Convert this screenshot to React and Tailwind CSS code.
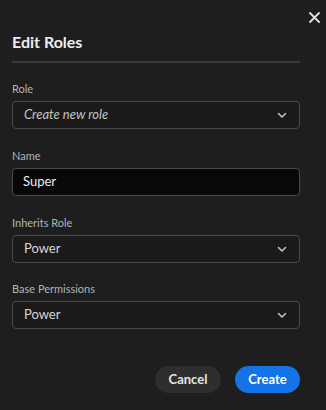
import React from "react";

const font = { fontFamily: "Lato, 'Open Sans', 'Noto Sans', sans-serif" };

function Chevron() {
  return (
    <svg width="10" height="10" viewBox="0 0 10 10" className="text-[#c8c8c8]">
      <path d="M1.5 3.5 L5 7 L8.5 3.5" fill="none" stroke="currentColor" strokeWidth="1.5" strokeLinecap="round" strokeLinejoin="round" />
    </svg>
  );
}

function Select({ value, italic }) {
  return (
    <div className="flex h-[28px] items-center justify-between rounded-[4px] border border-[#4a4a4a] bg-[#1a1a1a] pl-[11px] pr-[12px]">
      <span className={`text-[13px] ${italic ? "italic text-[#c4c4c4]" : "text-[#d6d6d6]"}`}>{value}</span>
      <Chevron />
    </div>
  );
}

function Label({ children }) {
  return <div className="mb-[5px] text-[11px] leading-[15px] text-[#b4b4b4]">{children}</div>;
}

export default function App() {
  return (
    <div className="relative h-[410px] w-[326px] bg-[#1e1e1e]" style={font}>
      <button className="absolute right-[6px] top-[11px] flex h-[12px] w-[12px] items-center justify-center text-[#e0e0e0]">
        <svg width="11" height="11" viewBox="0 0 11 11">
          <path d="M1 1 L10 10 M10 1 L1 10" stroke="currentColor" strokeWidth="1.8" strokeLinecap="round" />
        </svg>
      </button>
      <div className="px-[12px] pt-[32px]">
        <h1 className="text-[16px] font-bold leading-[20px] text-[#eeeeee]">Edit Roles</h1>
        <div className="mt-[9px] h-[2px] w-[288px] bg-[#3a3a3a]" />
        <div className="w-[288px] pt-[18px]">
          <Label>Role</Label>
          <Select value="Create new role" italic />
          <div className="mt-[19px]">
            <Label>Name</Label>
            <div className="flex h-[28px] items-center rounded-[4px] border border-[#4a4a4a] bg-[#080808] pl-[10px]">
              <span className="text-[13px] text-[#ececec]">Super</span>
            </div>
          </div>
          <div className="mt-[19px]">
            <Label>Inherits Role</Label>
            <Select value="Power" />
          </div>
          <div className="mt-[18px]">
            <Label>Base Permissions</Label>
            <Select value="Power" />
          </div>
          <div className="mt-[37px] flex justify-end gap-[14px]">
            <button className="h-[27px] w-[66px] rounded-full bg-[#2e2e2e] text-[13px] font-bold text-[#e6e6e6]">Cancel</button>
            <button className="h-[27px] w-[65px] rounded-full bg-[#1473e6] text-[13px] font-bold text-white">Create</button>
          </div>
        </div>
      </div>
    </div>
  );
}
